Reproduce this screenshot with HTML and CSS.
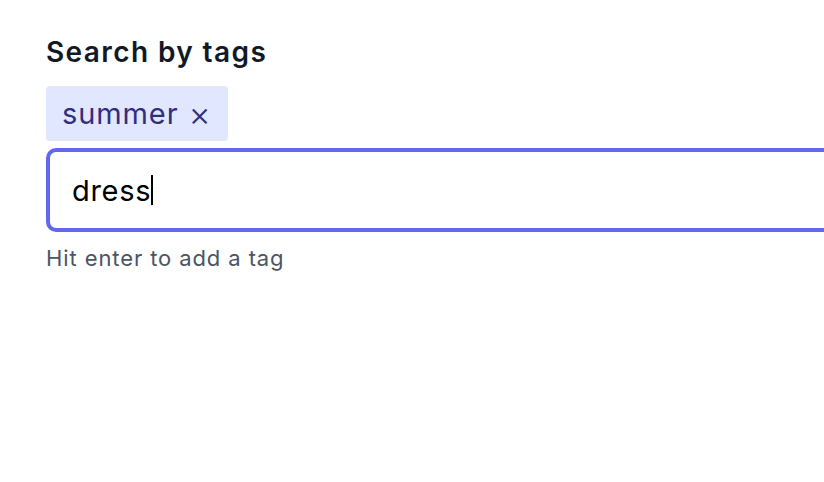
FILE: index.html
```html
<!DOCTYPE html>
<html lang="en">
<head>
<meta charset="utf-8">
<title>Search by tags</title>
<link rel="stylesheet" href="styles.css">
</head>
<body>
<div class="page">
  <label class="title">Search by tags</label>
  <div class="tags">
    <span class="tag">summer <span class="tag-x">×</span></span>
  </div>
  <div class="field"><span class="value">dress</span><span class="caret"></span></div>
  <p class="hint">Hit enter to add a tag</p>
</div>
</body>
</html>
```
FILE: styles.css
```css
html, body {
  margin: 0;
  padding: 0;
  background: #ffffff;
  overflow: hidden;
}
.page {
  padding: 34px 0 0 46px;
  font-family: Inter, "Noto Sans", sans-serif;
}
.title {
  display: block;
  font-size: 28px;
  line-height: 36px;
  font-weight: 600;
  letter-spacing: 1.4px;
  color: #111827;
}
.tags {
  display: flex;
  margin-top: 16px;
}
.tag {
  display: inline-flex;
  align-items: center;
  gap: 10px;
  background: #e0e7ff;
  color: #312e81;
  border-radius: 4px;
  font-size: 29px;
  letter-spacing: 0.9px;
  line-height: 55px;
  height: 55px;
  padding: 0 17px 0 16px;
}
.tag-x {
  font-size: 34px;
  letter-spacing: 0;
  font-weight: 300;
}
.field {
  box-sizing: border-box;
  margin-top: 7px;
  width: 900px;
  height: 84px;
  border: 4px solid #6366f1;
  border-radius: 10px;
  padding: 0 22px;
  display: flex;
  align-items: center;
  font-size: 29px;
  letter-spacing: 0.7px;
  color: #000;
}
.caret {
  display: inline-block;
  width: 2px;
  height: 30px;
  background: #000;
  margin-left: 0;
}
.hint {
  margin: 12px 0 0;
  font-size: 22px;
  line-height: 28px;
  letter-spacing: 0.9px;
  color: #4b5563;
}
```
